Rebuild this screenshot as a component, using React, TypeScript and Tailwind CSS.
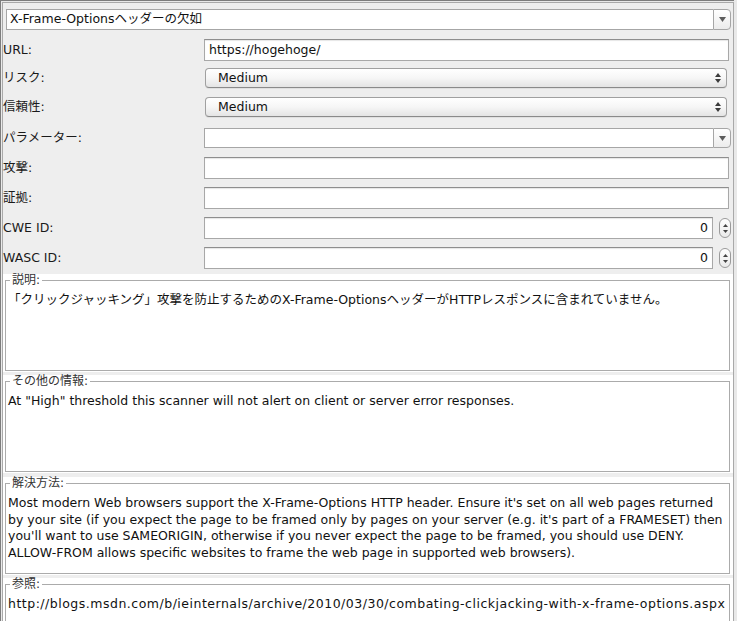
import React from 'react';

function DownArrow() {
  return (
    <svg width="7" height="5" viewBox="0 0 7 5">
      <path d="M0 0h7L3.5 5z" fill="#5c5c5c" />
    </svg>
  );
}

function UpDown() {
  return (
    <svg width="6" height="10" viewBox="0 0 6 10">
      <path d="M3 0L6 4H0z M0 6h6L3 10z" fill="#3c3c3c" />
    </svg>
  );
}

function DropCombo({ value, className = '' }: { value?: string; className?: string }) {
  return (
    <div className={`flex ${className}`}>
      <div className="flex-1 flex items-center bg-white border border-[#a6a6a6] border-r-0 pl-[3px] text-[12.5px] text-[#111] whitespace-nowrap">
        {value}
      </div>
      <div className="w-[18px] flex items-center justify-center border border-[#a6a6a6] rounded-r-[4px] bg-gradient-to-b from-white to-[#ececec]">
        <DownArrow />
      </div>
    </div>
  );
}

function SelectCombo({ value }: { value: string }) {
  return (
    <div className="ml-[1px] w-[522px] h-[20px] flex items-center justify-between rounded-[4px] border border-[#a0a0a0] border-b-[#8a8a8a] bg-gradient-to-b from-white via-[#f6f6f6] to-[#e4e4e4] pl-[12px] pr-[5px] text-[12.5px] text-[#111] shadow-[0_1px_0_rgba(0,0,0,0.06)]">
      <span>{value}</span>
      <UpDown />
    </div>
  );
}

function Field({ value, className = '', right = false }: { value?: string; className?: string; right?: boolean }) {
  return (
    <div
      className={`h-[22px] bg-white border border-[#a8a8a8] border-t-[#8e8e8e] shadow-[inset_0_1px_1px_rgba(0,0,0,0.1)] flex items-center px-[4px] text-[12.5px] text-[#111] ${right ? 'justify-end' : ''} ${className}`}
    >
      {value}
    </div>
  );
}

function Spinner() {
  return (
    <div className="ml-[6px] w-[12px] h-[20px] rounded-[6px] border border-[#9a9a9a] bg-gradient-to-b from-white to-[#eaeaea] flex flex-col items-center justify-center gap-[3px]">
      <svg width="5" height="3" viewBox="0 0 5 3">
        <path d="M2.5 0L5 3H0z" fill="#444" />
      </svg>
      <svg width="5" height="3" viewBox="0 0 5 3">
        <path d="M0 0h5L2.5 3z" fill="#444" />
      </svg>
    </div>
  );
}

function Row({ label, className, children }: { label: string; className: string; children: React.ReactNode }) {
  return (
    <div className={`flex items-center shrink-0 ${className}`}>
      <div className="w-[201px] shrink-0 text-[12.5px] text-[#1a1a1a] whitespace-nowrap">{label}</div>
      {children}
    </div>
  );
}

function Group({
  title,
  lines,
  className = '',
  textClass = '',
}: {
  title: string;
  lines: string[];
  className?: string;
  textClass?: string;
}) {
  return (
    <div className={`h-[98px] shrink-0 bg-white ${className}`}>
      <fieldset className="ml-[2px] mr-[3px] h-[97px] border border-[#ababab] pl-[2px] pr-[2px]">
        <legend className="ml-[2px] px-[2px] text-[12px] leading-[13px] text-[#333]">{title}</legend>
        <div className={`mt-[5px] text-[12.5px] leading-[16.5px] text-[#111] ${textClass}`}>
          {lines.map((l, i) => (
            <div key={i} className="whitespace-nowrap">
              {l}
            </div>
          ))}
        </div>
      </fieldset>
    </div>
  );
}

export default function App() {
  return (
    <div className="w-[737px] h-[621px] overflow-hidden bg-[#e9e9e9] font-['DejaVu_Sans','Noto_Sans_CJK_JP',sans-serif]">
      <div className="h-full w-[734px] border-t border-l border-[#7d7d7d] pt-px pl-px">
        <div className="h-full border-t border-l border-r border-[#a9a9a9] bg-[#eeeeee] flex flex-col">
          <DropCombo value="X-Frame-Optionsヘッダーの欠如" className="mt-[6px] ml-[3px] w-[725px] h-[21px] shrink-0" />

          <Row label="URL:" className="mt-[9px] h-[22px]">
            <Field value="https://hogehoge/" className="w-[525px]" />
          </Row>
          <Row label="リスク:" className="mt-[7px] h-[20px]">
            <SelectCombo value="Medium" />
          </Row>
          <Row label="信頼性:" className="mt-[9px] h-[20px]">
            <SelectCombo value="Medium" />
          </Row>
          <Row label="パラメーター:" className="mt-[11px] h-[20px]">
            <DropCombo className="w-[527px] h-[20px]" />
          </Row>
          <Row label="攻撃:" className="mt-[9px] h-[22px]">
            <Field className="w-[525px]" />
          </Row>
          <Row label="証拠:" className="mt-[8px] h-[22px]">
            <Field className="w-[525px]" />
          </Row>
          <Row label="CWE ID:" className="mt-[8px] h-[22px]">
            <Field value="0" right className="w-[509px]" />
            <Spinner />
          </Row>
          <Row label="WASC ID:" className="mt-[8px] h-[22px]">
            <Field value="0" right className="w-[509px]" />
            <Spinner />
          </Row>

          <div className="mt-[5px] flex flex-col">
            <Group
              title="説明:"
              lines={['「クリックジャッキング」攻撃を防止するためのX-Frame-OptionsヘッダーがHTTPレスポンスに含まれていません。']}
            />
            <Group
              title="その他の情報:"
              className="mt-[3px]"
              lines={['At "High" threshold this scanner will not alert on client or server error responses.']}
            />
            <Group
              title="解決方法:"
              className="mt-[4px]"
              lines={[
                "Most modern Web browsers support the X-Frame-Options HTTP header. Ensure it's set on all web pages returned",
                "by your site (if you expect the page to be framed only by pages on your server (e.g. it's part of a FRAMESET) then",
                "you'll want to use SAMEORIGIN, otherwise if you never expect the page to be framed, you should use DENY.",
                'ALLOW-FROM allows specific websites to frame the web page in supported web browsers).',
              ]}
            />
            <Group
              title="参照:"
              className="mt-[3px]"
              textClass="tracking-[0.5px]"
              lines={['http://blogs.msdn.com/b/ieinternals/archive/2010/03/30/combating-clickjacking-with-x-frame-options.aspx']}
            />
          </div>
        </div>
      </div>
    </div>
  );
}
